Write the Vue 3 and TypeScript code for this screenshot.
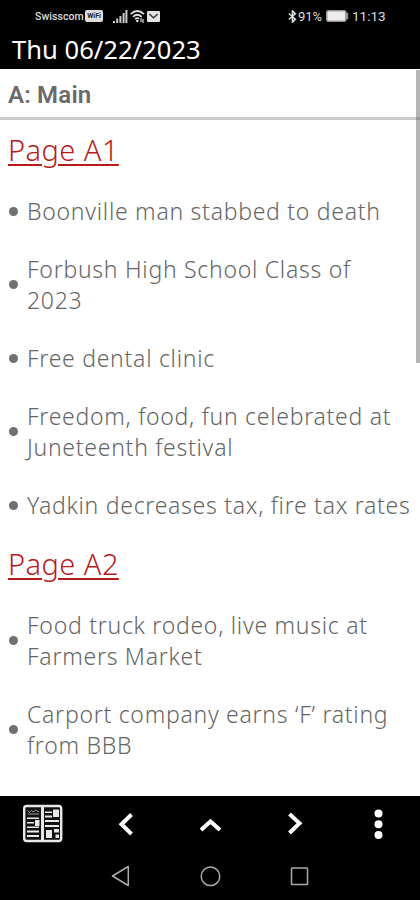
<script setup lang="ts">
interface Section {
  title: string
  articles: string[][]
}

const sections: Section[] = [
  {
    title: 'Page A1',
    articles: [
      ['Boonville man stabbed to death'],
      ['Forbush High School Class of', '2023'],
      ['Free dental clinic'],
      ['Freedom, food, fun celebrated at', 'Juneteenth festival'],
      ['Yadkin decreases tax, fire tax rates'],
    ],
  },
  {
    title: 'Page A2',
    articles: [
      ['Food truck rodeo, live music at', 'Farmers Market'],
      ['Carport company earns ‘F’ rating', 'from BBB'],
    ],
  },
]
</script>

<template>
  <div class="phone">
    <header class="top">
      <div class="status">
        <span class="carrier">Swisscom</span>
        <span class="wifi-call">WiFi</span>
        <svg class="signal" width="15" height="13" viewBox="0 0 15 13" fill="#ccc">
          <path d="M0 11h2v2H0zM3.2 8.500h2V13h-2zM6.400 6h2v7h-2zM9.600 3h2v10h-2zM12.400 0h2v13h-2z" />
        </svg>
        <svg class="wifi" width="15" height="13" viewBox="0 0 15 13" fill="none" stroke="#ddd" stroke-width="1.700">
          <path d="M.7 4.200Q7.300-2.200 14 4.200M2.900 6.800Q7.300 2.700 11.700 6.800M5 9.200Q7.300 7.200 9 8.800" />
          <circle cx="7.300" cy="11" r="1.200" fill="#ddd" stroke="none" />
          <path d="M11 8v4M13 9v4" stroke-width="1.200" />
        </svg>
        <svg class="mail" width="13" height="11" viewBox="0 0 13 11">
          <rect width="13" height="11" rx="1" fill="#e4e4e4" />
          <path d="M2.300 3l4.200 3.800L10.700 3" fill="none" stroke="#333" stroke-width="1.300" />
        </svg>
        <svg class="bluetooth" width="9" height="13" viewBox="0 0 9 13" fill="none" stroke="#ddd" stroke-width="1.600">
          <path d="M.8 3.500l6.500 5.700L4.500 12V1l2.800 2.800L.8 9.500" />
        </svg>
        <span class="percent">91%</span>
        <svg class="battery" width="23" height="12" viewBox="0 0 23 12">
          <rect x=".75" y=".75" width="19" height="10.500" rx="1.500" fill="#eee" stroke="#999" stroke-width="1.500" />
          <path d="M20.500 3h1.200v6h-1.200z" fill="#999" stroke="#999" />
        </svg>
        <span class="clock">11:13</span>
      </div>
      <h1 class="date">Thu 06/22/2023</h1>
    </header>

    <main class="content">
      <h2 class="category">A: Main</h2>
      <section v-for="section in sections" :key="section.title" class="section">
        <h3 class="page-title"><a>{{ section.title }}</a></h3>
        <ul class="articles">
          <li v-for="article in section.articles" :key="article[0]" class="article">
            <i class="dot"></i>
            <div>
              <span v-for="line in article" :key="line" class="line">{{ line }}</span>
            </div>
          </li>
        </ul>
      </section>
      <div class="scrollbar"></div>
    </main>

    <footer class="bottom">
      <nav class="tools">
        <svg width="84" height="40" viewBox="0 0 84 40">
          <rect x="24.200" y="3" width="37" height="35" rx="2.500" fill="#111" stroke="#e8e8e8" stroke-width="2.400" />
          <path
            d="M41 3h3v35h-3zM27 14.500h12v1.500h-12zM35 17h4.500v6h-4.500zM27 19h7v1.500h-7zM27 23.500h12v1.500h-12zM27 27.500h12v2h-12zM27 32h12v2h-12zM53 6.500h6v7.500h-6zM45 8.500h7v1.500h-7zM45 12.500h7v2h-7zM45 17h14v2h-14zM45 22h14v2h-14zM46 27h6v8h-6zM54 26h5v3.500h-5zM55.500 31.500h3.500v3.500h-3.500z"
            fill="#e8e8e8"
          />
          <path d="M27.500 7.500l2 2 2-2 2 1.500 2-2 3.500 2M28 11h11" fill="none" stroke="#999" />
        </svg>
        <svg width="84" height="40" viewBox="0 0 84 40" class="chevron"><path d="M47.500 11.500L37.500 21.300 47.500 31" /></svg>
        <svg width="84" height="40" viewBox="0 0 84 40" class="chevron"><path d="M33 27L42.500 18.500l9.500 8.500" /></svg>
        <svg width="84" height="40" viewBox="0 0 84 40" class="chevron"><path d="M37.500 11L47.500 20.300 37.500 30" /></svg>
        <svg width="84" height="40" viewBox="0 0 84 40" fill="#fff">
          <circle cx="42.500" cy="10.500" r="4" />
          <circle cx="42.500" cy="21.300" r="4" />
          <circle cx="42.500" cy="32" r="4" />
        </svg>
      </nav>
      <svg class="system" width="420" height="30" viewBox="0 0 420 30" fill="none" stroke="#aaa" stroke-width="1.500">
        <path d="M128.300 6.500v19L112.500 16z" stroke-linejoin="round" />
        <circle cx="210.500" cy="16.300" r="9.300" />
        <rect x="291.500" y="8" width="16" height="16.500" rx=".5" />
      </svg>
    </footer>
  </div>
</template>

<style>
body {
  background: #fff;
}
</style>

<style scoped>
.phone {
  width: 420px;
  height: 900px;
  display: flex;
  flex-direction: column;
  overflow: hidden;
  background: #fff;
  font-family: 'Noto Sans', sans-serif;
}
.top {
  height: 69px;
  flex: none;
  background: #000;
  color: #fff;
}
.status {
  height: 32px;
  display: flex;
  align-items: center;
  padding-left: 35px;
  box-sizing: border-box;
  font-family: Roboto, sans-serif;
  color: #ddd;
}
.carrier {
  width: 50px;
  font-size: 10.500px;
  font-weight: 500;
  letter-spacing: 0.05px;
}
.wifi-call {
  width: 18px;
  height: 12px;
  flex: none;
  border-radius: 2px;
  background: #ddd;
  color: #222;
  font-size: 7px;
  font-weight: 700;
  line-height: 12px;
  text-align: center;
}
.signal {
  margin-left: 10px;
}
.wifi {
  margin-left: 2px;
}
.mail {
  margin-left: 2px;
}
.bluetooth {
  margin-left: 128px;
}
.percent {
  width: 28px;
  margin-left: 1px;
  font-size: 13px;
  font-weight: 400;
  white-space: nowrap;
}
.battery {
  flex: none;
}
.clock {
  margin-left: 3px;
  font-size: 13.500px;
  font-weight: 400;
}
.date {
  margin: 0;
  padding-left: 12px;
  font-size: 25.600px;
  line-height: 35px;
  font-weight: 400;
}
.content {
  position: relative;
  height: 727px;
  flex: none;
  overflow: hidden;
}
.category {
  height: 51px;
  margin: 0;
  padding: 0 8px;
  box-sizing: border-box;
  border-bottom: 3px solid #ccc;
  color: #6a6a6a;
  font: 600 24px/53px Roboto, sans-serif;
  letter-spacing: 0.2px;
}
.page-title {
  margin: 0;
  padding: 13px 8px 15px;
  font-size: 29px;
  line-height: 34px;
  font-weight: 300;
  letter-spacing: 0.45px;
  color: #b71c1c;
}
.page-title a {
  text-decoration: underline;
  text-decoration-thickness: 1.500px;
  text-underline-offset: 3px;
}
.articles {
  margin: 0;
  padding: 0;
  list-style: none;
}
.article {
  display: flex;
  align-items: center;
  padding: 13.500px 0 13.500px 9px;
  color: #666;
  font-size: 23px;
  font-weight: 300;
  line-height: 31px;
  letter-spacing: 0.72px;
}
.dot {
  width: 9px;
  height: 9px;
  flex: none;
  margin-right: 9px;
  border-radius: 50%;
  background: #707070;
}
.line {
  display: block;
  white-space: nowrap;
}
.scrollbar {
  position: absolute;
  top: 1px;
  right: 0;
  width: 4px;
  height: 293px;
  background: rgba(90, 90, 90, 0.45);
}
.bottom {
  height: 105px;
  flex: none;
  box-sizing: border-box;
  padding-top: 7px;
  background: #000;
}
.tools {
  display: flex;
}
.chevron {
  fill: none;
  stroke: #fff;
  stroke-width: 4;
}
.system {
  display: block;
  margin-top: 17px;
}
</style>
